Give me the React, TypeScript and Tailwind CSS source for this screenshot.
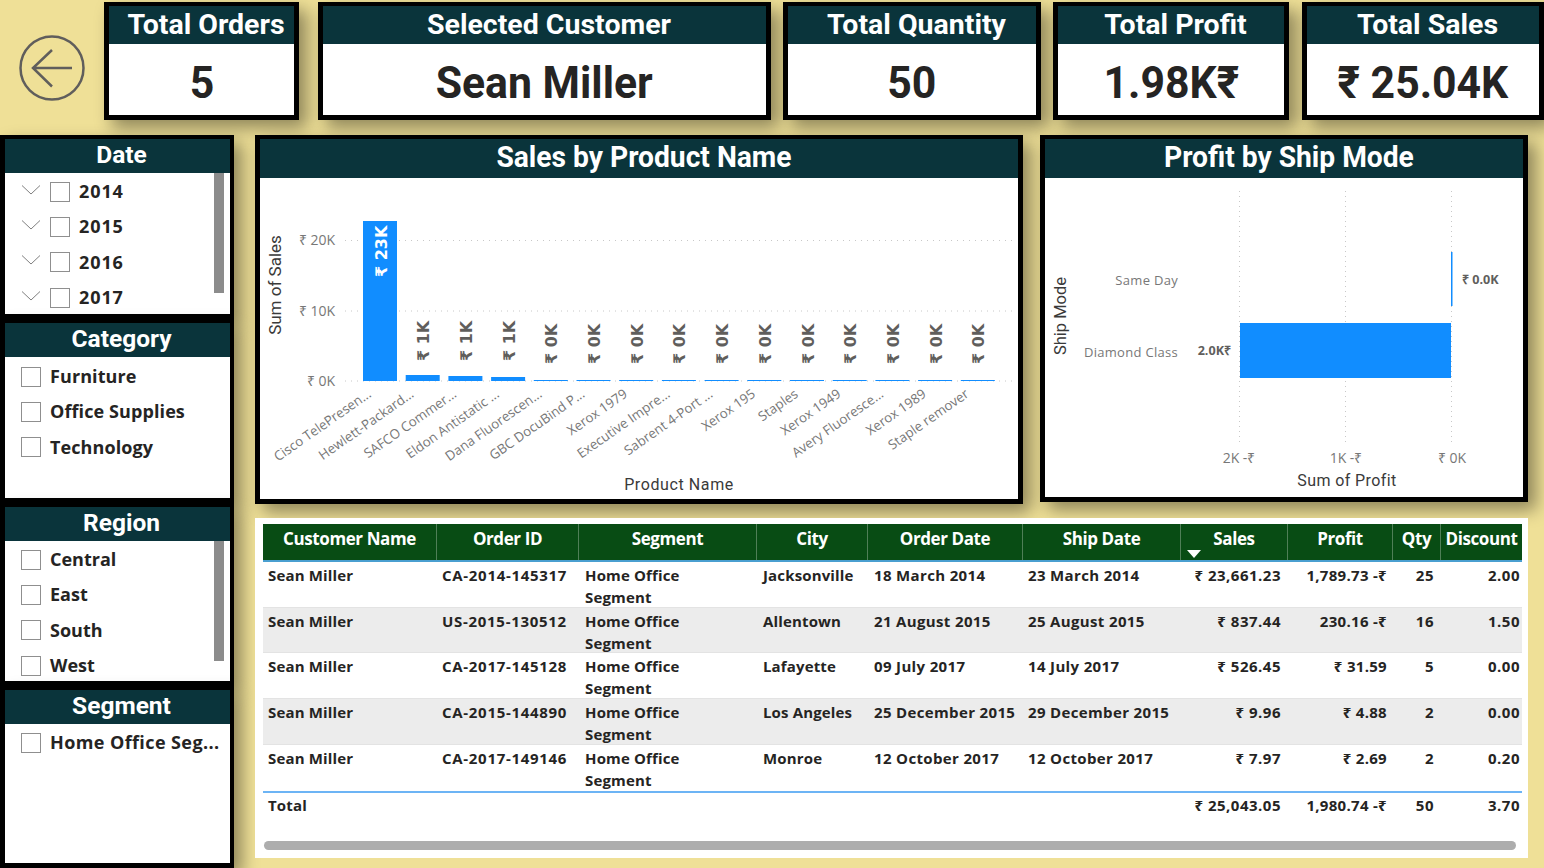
const din = "font-['Roboto',sans-serif]";
const body = "font-['Open_Sans','Noto_Sans',sans-serif]";

const kpis = [
  { title: "Total Orders", value: "5", width: "w-[195px]", margin: "" },
  { title: "Selected Customer", value: "Sean Miller", width: "w-[453px]", margin: "ml-[19px]" },
  { title: "Total Quantity", value: "50", width: "w-[258px]", margin: "ml-[12px]" },
  { title: "Total Profit", value: "1.98K₹", width: "w-[236px]", margin: "ml-[12px]" },
  { title: "Total Sales", value: "₹ 25.04K", width: "w-[242px]", margin: "ml-[13px]" },
];

const columns = [
  { label: "Customer Name", right: false },
  { label: "Order ID", right: false },
  { label: "Segment", right: false },
  { label: "City", right: false },
  { label: "Order Date", right: false },
  { label: "Ship Date", right: false },
  { label: "Sales", right: true },
  { label: "Profit", right: true },
  { label: "Qty", right: true },
  { label: "Discount", right: true },
];

const rows = [
  ["Sean Miller", "CA-2014-145317", "Home Office Segment", "Jacksonville", "18 March 2014", "23 March 2014", "₹ 23,661.23", "1,789.73 -₹", "25", "2.00"],
  ["Sean Miller", "US-2015-130512", "Home Office Segment", "Allentown", "21 August 2015", "25 August 2015", "₹ 837.44", "230.16 -₹", "16", "1.50"],
  ["Sean Miller", "CA-2017-145128", "Home Office Segment", "Lafayette", "09 July 2017", "14 July 2017", "₹ 526.45", "₹ 31.59", "5", "0.00"],
  ["Sean Miller", "CA-2015-144890", "Home Office Segment", "Los Angeles", "25 December 2015", "29 December 2015", "₹ 9.96", "₹ 4.88", "2", "0.00"],
  ["Sean Miller", "CA-2017-149146", "Home Office Segment", "Monroe", "12 October 2017", "12 October 2017", "₹ 7.97", "₹ 2.69", "2", "0.20"],
];
const rowHeights = ["h-[46px]", "h-[45px]", "h-[46px]", "h-[46px]", "h-[46px]"];
const totals = ["Total", "", "", "", "", "", "₹ 25,043.05", "1,980.74 -₹", "50", "3.70"];
const gridCols = "grid grid-cols-[174px_142px_178px_111px_155px_158px_107px_105px_48px_81px]";
const cellPad = [
  "pl-[5px]",
  "pl-[5px] whitespace-nowrap tracking-[0.7px]",
  "pl-[6px] pr-[40px]",
  "pl-[6px] whitespace-nowrap",
  "pl-[6px] whitespace-nowrap tracking-[0.35px]",
  "pl-[5px] whitespace-nowrap tracking-[0.35px]",
  "text-right pr-[7px] tracking-[0.5px]",
  "text-right pr-[6px] tracking-[0.3px]",
  "text-right pr-[7px] tracking-[0.5px]",
  "text-right pr-[2px] tracking-[0.5px]",
];

const products = [
  { name: "Cisco TelePresen...", label: "₹ 23K", h: 160 },
  { name: "Hewlett-Packard...", label: "₹ 1K", h: 6 },
  { name: "SAFCO Commer...", label: "₹ 1K", h: 5 },
  { name: "Eldon Antistatic ...", label: "₹ 1K", h: 4 },
  { name: "Dana Fluorescen...", label: "₹ 0K", h: 1 },
  { name: "GBC DocuBind P...", label: "₹ 0K", h: 1 },
  { name: "Xerox 1979", label: "₹ 0K", h: 1 },
  { name: "Executive Impre...", label: "₹ 0K", h: 1 },
  { name: "Sabrent 4-Port ...", label: "₹ 0K", h: 1 },
  { name: "Xerox 195", label: "₹ 0K", h: 1 },
  { name: "Staples", label: "₹ 0K", h: 1 },
  { name: "Xerox 1949", label: "₹ 0K", h: 1 },
  { name: "Avery Fluoresce...", label: "₹ 0K", h: 1 },
  { name: "Xerox 1989", label: "₹ 0K", h: 1 },
  { name: "Staple remover", label: "₹ 0K", h: 1 },
];

function KpiCard({ title, value, width, margin }: { title: string; value: string; width: string; margin: string }) {
  return (
    <div className={"[box-shadow:8px_8px_16px_#00000066] h-[118px] shrink-0 bg-white border-t-[4px] border-x-[5px] border-b-[5px] border-black flex flex-col " + width + " " + margin}>
      <div className={`${din} h-[39px] bg-[#0a343b] text-white text-center pl-[9px] text-[28.5px] leading-[38px] font-bold whitespace-nowrap`}>{title}</div>
      <div className={`${din} flex-1 text-center text-[#252423] text-[45px] leading-[77px] font-bold`}>
        <span className="inline-block scale-x-[0.95]">{value}</span>
      </div>
    </div>
  );
}

function Checkbox() {
  return <span className="block w-[20px] h-[20px] shrink-0 border border-[#8f8f8f] bg-white" />;
}

function Slicer({ title, items, chevrons, scroll, height, listClass }: { title: string; items: string[]; chevrons?: boolean; scroll?: boolean; height: string; listClass: string }) {
  return (
    <div className={"[box-shadow:8px_8px_16px_#00000066] w-[234px] shrink-0 bg-white border-t-[4px] border-r-[4px] border-b-[5px] border-l-[5px] border-black flex flex-col " + height}>
      <div className={`${din} h-[34px] shrink-0 bg-[#0a343b] text-white text-center pl-[8px] text-[24.5px] leading-[31px] font-bold`}>{title}</div>
      <div className="relative flex-1 overflow-hidden">
        <div className={`${body} ${listClass} pl-[16px] text-[18px] font-bold text-[#252423]`}>
          {items.map((item) => (
            <div key={item} className="flex items-center h-[35.3px] whitespace-nowrap">
              {chevrons && (
                <svg width="20" height="12" viewBox="0 0 20 12" className="mr-[9px] mb-[4px] shrink-0">
                  <path d="M1 1.5 L10 10 L19 1.5" fill="none" stroke="#7f7f7f" strokeWidth="1" />
                </svg>
              )}
              <Checkbox />
              <span className="ml-[9px]">{item}</span>
            </div>
          ))}
        </div>
        {scroll && <div className="absolute top-0 left-[209px] w-[10px] h-[120px] bg-[#8c8c8c]" />}
      </div>
    </div>
  );
}

function SalesChart() {
  return (
    <svg viewBox="260 178 758 321" className="block w-[758px] h-[321px]">
      {[240.5, 311, 381].map((y) => (
        <line key={y} x1="345" x2="1012" y1={y} y2={y} stroke="#c8c8c8" strokeWidth="1" strokeDasharray="1 5" />
      ))}
      {[["₹ 20K", 245], ["₹ 10K", 316], ["₹ 0K", 386]].map(([t, y]) => (
        <text key={t} x="335" y={y} textAnchor="end" fontFamily="Open Sans" fontSize="14" fill="#777777">{t}</text>
      ))}
      <text transform="translate(281 285) rotate(-90)" textAnchor="middle" fontFamily="Roboto" fontSize="17" fill="#3a3a3a">Sum of Sales</text>
      {products.map((p, i) => {
        const cx = 380 + i * 42.7;
        const big = i === 0;
        const labelY = big ? 277 : p.label === "₹ 1K" ? 361 : 364;
        return (
          <g key={p.name}>
            <rect x={cx - 17} y={381 - p.h} width="34" height={p.h} fill="#118dff" />
            <text transform={`translate(${cx + 6.5} ${labelY}) rotate(-90)`} fontFamily="DejaVu Sans" fontWeight="700" fontSize="16" fill={big ? "#ffffff" : "#605e5c"}>{p.label}</text>
            <text transform={`translate(${cx - 8} 396) rotate(-35)`} textAnchor="end" fontFamily="Open Sans" fontSize="13.3" fill="#777777">{p.name}</text>
          </g>
        );
      })}
      <text x="679" y="490" textAnchor="middle" fontFamily="Roboto" fontSize="16" letterSpacing="0.6" fill="#3a3a3a">Product Name</text>
    </svg>
  );
}

function ProfitChart() {
  return (
    <svg viewBox="1045 178 478 319" className="block w-[478px] h-[319px]">
      {[1239.5, 1345.5, 1451.5].map((x) => (
        <line key={x} x1={x} x2={x} y1="191" y2="446" stroke="#c8c8c8" strokeWidth="1" strokeDasharray="1 4" />
      ))}
      <text transform="translate(1066 316) rotate(-90)" textAnchor="middle" fontFamily="Roboto" fontSize="16.5" fill="#3a3a3a">Ship Mode</text>
      <text x="1178" y="285" textAnchor="end" fontFamily="Open Sans" fontSize="13" letterSpacing="0.3" fill="#777777">Same Day</text>
      <text x="1178" y="357" textAnchor="end" fontFamily="Open Sans" fontSize="13" letterSpacing="0.3" fill="#777777">Diamond Class</text>
      <rect x="1451" y="252" width="1.5" height="54" fill="#118dff" />
      <rect x="1240" y="323" width="211" height="55" fill="#118dff" />
      <text x="1462" y="284" fontFamily="Open Sans" fontWeight="700" fontSize="12.6" fill="#605e5c">₹ 0.0K</text>
      <text x="1231" y="355" textAnchor="end" fontFamily="Open Sans" fontWeight="700" fontSize="12.6" fill="#605e5c">2.0K₹</text>
      {[["2K -₹", 1239], ["1K -₹", 1346], ["₹ 0K", 1452]].map(([t, x]) => (
        <text key={t} x={x} y="463" textAnchor="middle" fontFamily="Open Sans" fontSize="14" fill="#777777">{t}</text>
      ))}
      <text x="1347" y="486" textAnchor="middle" fontFamily="Roboto" fontSize="16" letterSpacing="0.4" fill="#3a3a3a">Sum of Profit</text>
    </svg>
  );
}

function ChartCard({ title, width, height, children }: { title: string; width: string; height: string; children: React.ReactNode }) {
  return (
    <div className={"[box-shadow:8px_8px_16px_#00000066] shrink-0 bg-white border-t-[4px] border-x-[5px] border-b-[5px] border-black flex flex-col " + width + " " + height}>
      <div className={`${din} h-[39px] shrink-0 bg-[#0a343b] text-white text-center pl-[9px] text-[30px] leading-[36px] font-bold whitespace-nowrap`}>
        <span className="inline-block scale-x-[0.94]">{title}</span>
      </div>
      {children}
    </div>
  );
}

function OrdersTable() {
  return (
    <div className={`${body} relative w-[1273px] h-[340px] mt-[14px] bg-white pt-[6px] pl-[8px] text-[15px] leading-[21.5px] font-bold tracking-[0.15px] text-[#252423]`}>
      <div className={`${gridCols} w-[1259px] h-[38px] bg-[#084c14] border-b-2 border-[#4a9fd0] text-white`}>
        {columns.map((c) => (
          <div key={c.label} className="relative text-center text-[17px] leading-[30px] font-bold border-r border-[#4f7f57] last:border-r-0 whitespace-nowrap tracking-[-0.4px]">
            {c.label}
            {c.label === "Sales" && (
              <svg width="14" height="8" viewBox="0 0 14 8" className="absolute left-[6px] bottom-[2px]">
                <path d="M0 0 H14 L7 8 Z" fill="#ffffff" />
              </svg>
            )}
          </div>
        ))}
      </div>
      {rows.map((row, r) => (
        <div key={row[1]} className={`${gridCols} w-[1259px] ${rowHeights[r]} ${r % 2 === 1 ? "bg-[#ececec]" : "bg-white"} ${r < 4 ? "border-b border-[#e3e3e3]" : ""}`}>
          {row.map((cell, c) => (
            <div key={c} className={`pt-[3px] ${cellPad[c]}`}>
              {cell}
            </div>
          ))}
        </div>
      ))}
      <div className={`${gridCols} w-[1259px] h-[30px] border-t-2 border-[#6cb4f5]`}>
        {totals.map((cell, c) => (
          <div key={c} className={`pt-[2px] ${cellPad[c]}`}>{cell}</div>
        ))}
      </div>
      <div className="absolute left-[9px] bottom-[8px] w-[1252px] h-[9px] rounded-full bg-[#adadad]" />
    </div>
  );
}

export default function App() {
  return (
    <div className="w-[1544px] h-[868px] overflow-hidden bg-[#efe097] flex flex-col">
      <div className="flex shrink-0 pt-[2px] h-[120px]">
        <div className="w-[104px] shrink-0 flex items-center justify-center pt-[14px]">
          <svg width="68" height="68" viewBox="0 0 68 68">
            <circle cx="34" cy="34" r="31.5" fill="none" stroke="#605e5c" strokeWidth="2.5" />
            <path d="M54 34 H14.5 M34 16 L15 34 L34 52.5" fill="none" stroke="#605e5c" strokeWidth="2.5" />
          </svg>
        </div>
        {kpis.map((k) => (
          <KpiCard key={k.title} {...k} />
        ))}
      </div>
      <div className="flex mt-[15px]">
        <div className="w-[234px] shrink-0 flex flex-col">
          <Slicer title="Date" height="h-[184px]" listClass="pt-[1px] tracking-[0.9px]" items={["2014", "2015", "2016", "2017"]} chevrons scroll />
          <Slicer title="Category" height="h-[184px]" listClass="pt-[2px] tracking-[0.1px]" items={["Furniture", "Office Supplies", "Technology"]} />
          <Slicer title="Region" height="h-[183px]" listClass="pt-[1px]" items={["Central", "East", "South", "West"]} scroll />
          <Slicer title="Segment" height="h-[182px]" listClass="pt-[1px] tracking-[0.4px]" items={["Home Office Seg..."]} />
        </div>
        <div className="ml-[21px] flex flex-col">
          <div className="flex">
            <ChartCard title="Sales by Product Name" width="w-[768px]" height="h-[369px]">
              <SalesChart />
            </ChartCard>
            <div className="ml-[17px]">
              <ChartCard title="Profit by Ship Mode" width="w-[488px]" height="h-[367px]">
                <ProfitChart />
              </ChartCard>
            </div>
          </div>
          <OrdersTable />
        </div>
      </div>
    </div>
  );
}
